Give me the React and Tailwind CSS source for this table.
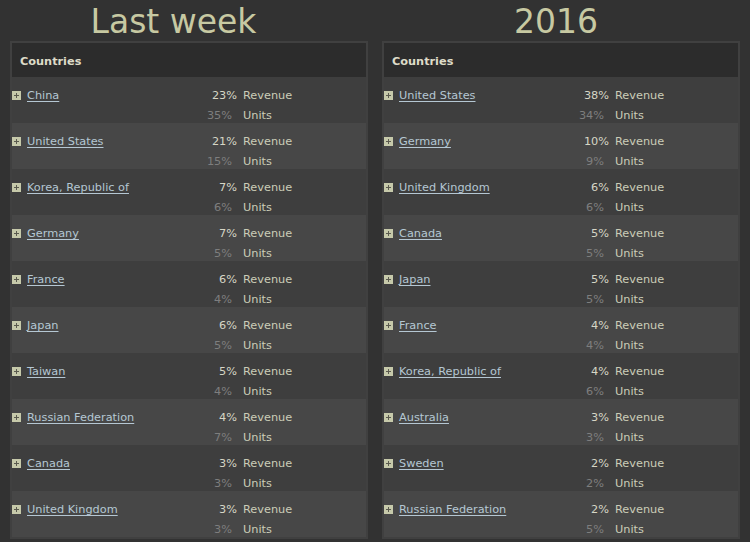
import React from "react";

const left = [
  ["China", "23%", "35%"],
  ["United States", "21%", "15%"],
  ["Korea, Republic of", "7%", "6%"],
  ["Germany", "7%", "5%"],
  ["France", "6%", "4%"],
  ["Japan", "6%", "5%"],
  ["Taiwan", "5%", "4%"],
  ["Russian Federation", "4%", "7%"],
  ["Canada", "3%", "3%"],
  ["United Kingdom", "3%", "3%"],
];

const right = [
  ["United States", "38%", "34%"],
  ["Germany", "10%", "9%"],
  ["United Kingdom", "6%", "6%"],
  ["Canada", "5%", "5%"],
  ["Japan", "5%", "5%"],
  ["France", "4%", "4%"],
  ["Korea, Republic of", "4%", "6%"],
  ["Australia", "3%", "3%"],
  ["Sweden", "2%", "2%"],
  ["Russian Federation", "2%", "5%"],
];

function Plus() {
  return (
    <svg width="9" height="9" viewBox="0 0 9 9" className="block shrink-0">
      <rect x="0" y="0" width="9" height="9" fill="#c6c9aa" />
      <rect x="4" y="2" width="1" height="5" fill="#5a5a4e" />
      <rect x="2" y="4" width="5" height="1" fill="#5a5a4e" />
    </svg>
  );
}

function Panel({ title, rows, titleShift }) {
  return (
    <div className="w-[358px] shrink-0">
      <div
        className={`h-[41px] leading-[43px] text-center text-[33px] text-[#c7c9a2] whitespace-nowrap ${titleShift}`}
      >
        {title}
      </div>
      <div className="border-2 border-[#404040]">
        <div className="h-[34px] bg-[#2c2c2c] flex items-center pl-[8px] pt-[4px] text-[11.3px] font-bold text-[#dedbc8]">
          Countries
        </div>
        {rows.map(([name, rev, units], i) => (
          <div
            key={name}
            className={`h-[46px] pt-[9px] flex text-[11.3px] leading-[20px] ${
              i % 2 === 0 ? "bg-[#3e3e3e]" : "bg-[#474747]"
            }`}
          >
            <div className="w-[180px] flex items-start">
              <div className="h-[18px] flex items-center">
                <Plus />
              </div>
              <a
                href="#"
                className="ml-[6px] text-[#b5c7d3] underline underline-offset-2 whitespace-nowrap"
              >
                {name}
              </a>
            </div>
            <div className="w-[45px] text-right">
              <div className="text-[#d6d6c6]">{rev}</div>
              <div className="text-[#7e7e7e] pr-[5px]">{units}</div>
            </div>
            <div className="pl-[6px]">
              <div className="text-[#cbcdb8]">Revenue</div>
              <div className="text-[#cbcdb8]">Units</div>
            </div>
          </div>
        ))}
      </div>
    </div>
  );
}

export default function App() {
  return (
    <div
      className="w-[750px] h-[542px] overflow-hidden bg-[#323232] flex gap-[14px] px-[10px]"
      style={{ fontFamily: '"DejaVu Sans", Verdana, sans-serif' }}
    >
      <Panel title="Last week" rows={left} titleShift="pr-[31px]" />
      <Panel title="2016" rows={right} titleShift="pr-[10px]" />
    </div>
  );
}
